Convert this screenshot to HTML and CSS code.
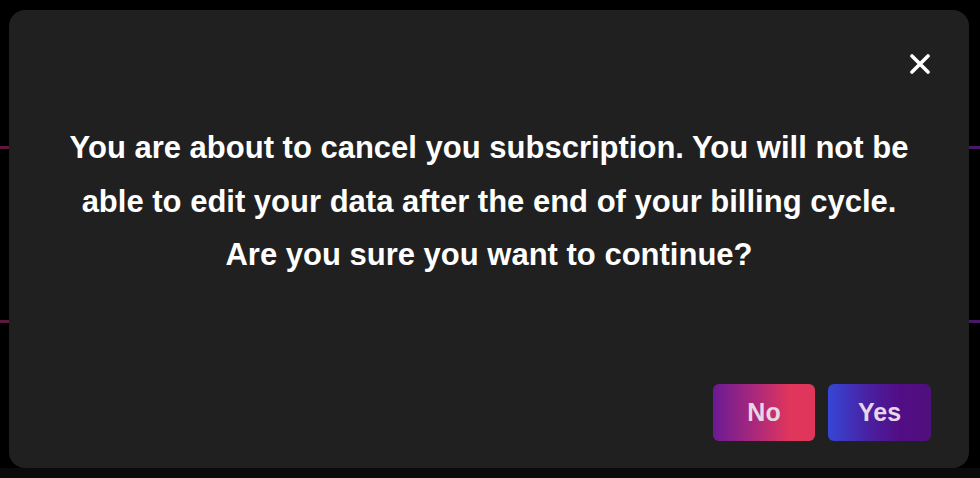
FILE: index.html
```html
<!DOCTYPE html>
<html lang="en">
<head>
<meta charset="utf-8">
<title>Cancel subscription</title>
<link rel="stylesheet" href="styles.css">
</head>
<body>
<div class="backdrop-line line-a"></div>
<div class="backdrop-line line-b"></div>
<div class="modal">
  <div class="modal-head">
    <button class="close" aria-label="Close">
      <svg width="20" height="20" viewBox="0 0 20 20"><path d="M2 2 L18 18 M18 2 L2 18" stroke="#fff" stroke-width="3.6" stroke-linecap="round"/></svg>
    </button>
  </div>
  <p class="message">You are about to cancel you subscription. You will not be able to edit your data after the end of your billing cycle. Are you sure you want to continue?</p>
  <div class="actions">
    <button class="btn btn-no">No</button>
    <button class="btn btn-yes">Yes</button>
  </div>
</div>
</body>
</html>
```
FILE: styles.css
```css
html, body {
  margin: 0;
  height: 100%;
}
body {
  background: #000;
  padding: 10px 11px 0 9px;
  box-sizing: border-box;
  font-family: "Liberation Sans", Arial, sans-serif;
  position: relative;
  overflow: hidden;
}
body::after {
  content: "";
  position: absolute;
  left: 0;
  right: 0;
  bottom: 0;
  height: 10px;
  background: #0b0b0b;
}
.backdrop-line {
  position: absolute;
  left: 0;
  right: 0;
  height: 3px;
  background: linear-gradient(90deg, #5c1a3c, #4a1868);
}
.line-a { top: 146px; }
.line-b { top: 320px; }
.modal {
  position: relative;
  z-index: 1;
  width: 960px;
  height: 458px;
  background: #202020;
  border-radius: 16px;
  box-sizing: border-box;
  padding: 44px 38px 27px 38px;
  display: flex;
  flex-direction: column;
}
.modal-head {
  display: flex;
  justify-content: flex-end;
  padding-right: 1px;
}
.close {
  background: none;
  border: 0;
  padding: 0;
  width: 20px;
  height: 20px;
  cursor: pointer;
  display: block;
}
.close svg { display: block; }
.message {
  margin: 47px 0 0;
  color: #fff;
  font-weight: 700;
  font-size: 31px;
  line-height: 53.5px;
  text-align: center;
  padding: 0 19px;
}
.actions {
  margin-top: auto;
  display: flex;
  justify-content: flex-end;
  gap: 13px;
}
.btn {
  width: 102px;
  height: 57px;
  border: 0;
  border-radius: 6px;
  font-family: "Liberation Sans", Arial, sans-serif;
  font-weight: 700;
  font-size: 25px;
  color: #e6d6e6;
  cursor: pointer;
}
.btn-no {
  background: linear-gradient(90deg, #6a1a94 0%, #b02a78 45%, #e0355c 75%, #e0365a 100%);
}
.btn-yes {
  width: 103px;
  background: linear-gradient(90deg, #3646d6 0%, #4a20a0 40%, #520d85 70%, #4f0f7c 100%);
}
```
